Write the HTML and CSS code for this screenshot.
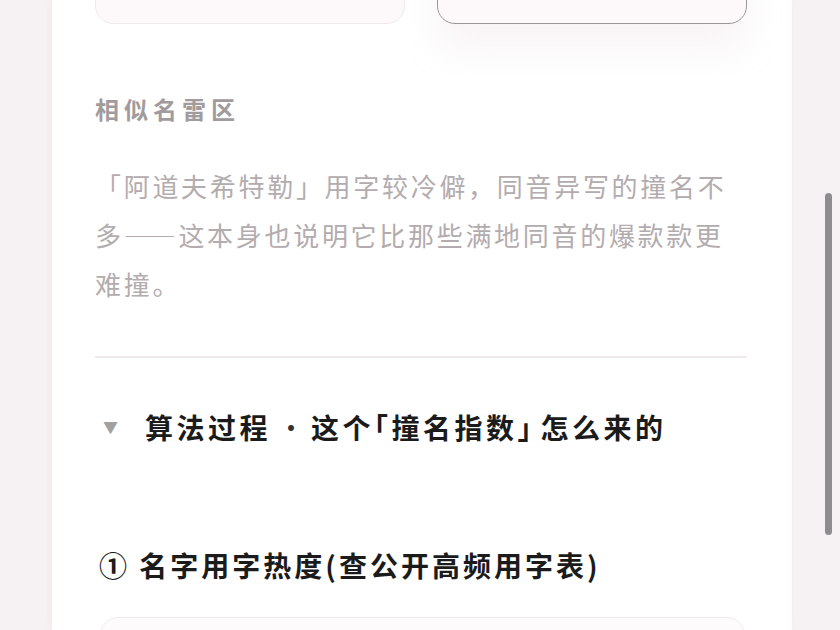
FILE: index.html
```html
<!DOCTYPE html>
<html lang="zh-CN">
<head>
<meta charset="utf-8">
<title>撞名指数</title>
<link rel="stylesheet" href="styles.css">
</head>
<body>
<div class="page">
  <main class="sheet">
    <div class="choice-row">
      <div class="choice"></div>
      <div class="choice choice-active"></div>
    </div>

    <h3 class="label">相似名雷区</h3>
    <p class="note">「阿道夫希特勒」用字较冷僻，同音异写的撞名不多——这本身也说明它比那些满地同音的爆款款更难撞。</p>

    <hr class="divider">

    <details class="algo" open>
      <summary class="algo-summary"><span class="caret">▼</span><span class="algo-title">算法过程<span class="sep">·</span>这个<span class="br-open">「</span>撞名指数<span class="br-close">」</span>怎么来的</span></summary>
      <h4 class="step">① 名字用字热度(查公开高频用字表)</h4>
      <div class="step-card"></div>
    </details>
  </main>
  <div class="scroll-track"><div class="scroll-thumb"></div></div>
</div>
</body>
</html>
```

FILE: styles.css
```css
html, body {
  margin: 0;
  padding: 0;
  height: 100%;
  overflow: hidden;
}

body {
  background: #f6f2f4;
  font-family: "Noto Sans CJK SC", "Noto Sans", sans-serif;
}

.page {
  display: flex;
  height: 630px;
  padding-left: 52px;
  box-sizing: border-box;
}

.sheet {
  width: 740px;
  background: #ffffff;
  padding: 0 45px 0 43px;
  box-sizing: border-box;
  box-shadow: -2px 0 6px rgba(235, 225, 205, 0.35);
  overflow: hidden;
}

.choice-row {
  display: grid;
  grid-template-columns: 1fr 1fr;
  gap: 32px;
  margin-top: -60px;
}

.choice {
  height: 84px;
  box-sizing: border-box;
  border-radius: 18px;
  border: 1px solid #f1eaec;
  background: #fdf9fb;
}

.choice-active {
  border: 1.5px solid #9b9698;
  background: #fdf9fb;
  box-shadow: 0 24px 34px rgba(230, 212, 220, 0.25);
}

.label {
  margin: 69px 0 0;
  font-size: 24px;
  line-height: 32px;
  letter-spacing: 5px;
  font-weight: 700;
  color: #a19b9d;
}

.note {
  margin: 36px 0 0;
  font-size: 26px;
  line-height: 49px;
  letter-spacing: 2.7px;
  font-weight: 400;
  color: #b3acae;
}

.divider {
  margin: 48px 0 0;
  border: 0;
  height: 2px;
  background: #eeeaec;
}

.algo {
  margin-top: 49px;
}

.algo-summary {
  list-style: none;
  display: flex;
  align-items: center;
  height: 40px;
  cursor: pointer;
}

.algo-summary::-webkit-details-marker {
  display: none;
}

.caret {
  width: 50px;
  padding-left: 8px;
  box-sizing: border-box;
  font-size: 15px;
  color: #a3a0a2;
  line-height: 40px;
}

.algo-title {
  font-size: 28px;
  line-height: 40px;
  letter-spacing: 3.5px;
  font-weight: 700;
  color: #1b1b1b;
}

.sep {
  display: inline-block;
  width: 40px;
  text-align: center;
  letter-spacing: 0;
  font-weight: 400;
  color: #333;
}

.br-open,
.br-close {
  font-feature-settings: "halt" 1;
}

.br-close {
  letter-spacing: 9px;
}

.step {
  margin: 98px 0 0;
  padding-left: 4px;
  font-size: 28px;
  line-height: 40px;
  letter-spacing: 3px;
  font-weight: 700;
  color: #1b1b1b;
}

.step-card {
  margin: 32px 2px 0 5px;
  height: 120px;
  border: 1.5px solid #f0ecee;
  border-radius: 18px;
  background: #fdfbfc;
}

.scroll-track {
  flex: 1;
  position: relative;
}

.scroll-thumb {
  position: absolute;
  left: 33px;
  top: 193px;
  width: 7px;
  height: 342px;
  border-radius: 4px;
  background: #8f8c8f;
}
```
